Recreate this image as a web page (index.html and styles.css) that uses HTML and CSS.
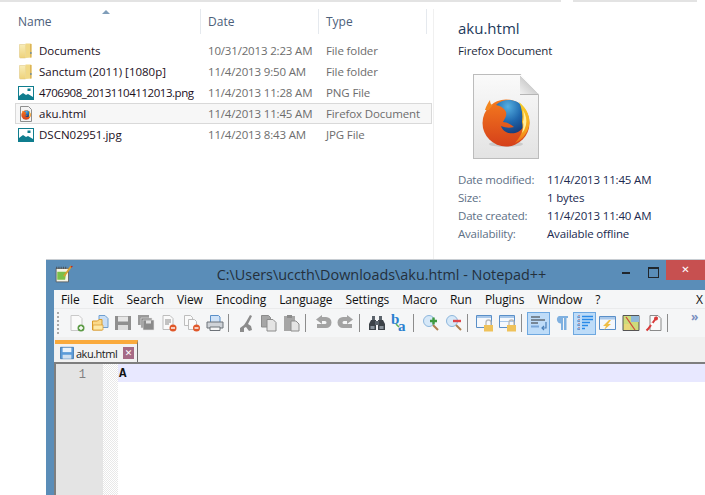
FILE: index.html
```html
<!DOCTYPE html>
<html lang="en">
<head>
<meta charset="utf-8">
<title>aku.html - Notepad++</title>
<link rel="stylesheet" href="styles.css">
</head>
<body>
<svg class="defs" width="0" height="0" aria-hidden="true">
  <defs>
    <linearGradient id="gFolder" x1="0" x2="0" y1="0" y2="1"><stop offset="0" stop-color="#f8edb8"/><stop offset="1" stop-color="#eed27a"/></linearGradient>
    <radialGradient id="gGlobe" cx=".4" cy=".2" r=".85"><stop offset="0" stop-color="#55b0e2"/><stop offset=".55" stop-color="#1f67ad"/><stop offset="1" stop-color="#163a78"/></radialGradient>
    <linearGradient id="gFox" x1="0" x2="0" y1="0" y2="1"><stop offset="0" stop-color="#f47a1e"/><stop offset="1" stop-color="#d5401a"/></linearGradient>
    <linearGradient id="gFlame" x1="0" x2="0" y1="0" y2="1"><stop offset="0" stop-color="#f7d02a"/><stop offset=".7" stop-color="#f6a31c"/><stop offset="1" stop-color="#ec6d1a"/></linearGradient>
    <symbol id="fox" viewBox="0 0 50 50">
      <ellipse cx="25" cy="46" rx="17" ry="3" fill="#000" opacity=".12"/>
      <circle cx="25" cy="25" r="23.500" fill="url(#gFox)"/>
      <path d="M4 12C5 8 7 5 9 2c0 3 1 5 3 5-1 1-3 3-4 5z" fill="#f4861f"/>
      <path d="M15 7C22 0 36 0 42 9c5 9 3 21-5 25-6 3-15 1-17-6 5 2 9 2 13 1-4-3-8-5-11-5 2-4 4-6 3-10-1-3-5-6-10-7z" fill="url(#gGlobe)"/>
      <path d="M38 4c8 6 12 16 10 24-2 8-7 14-14 17 6-7 9-13 7-21 1-7 0-14-3-20z" fill="url(#gFlame)"/>
      <path d="M42 12c3 5 4 10 3 15-1 3-2 6-4 8 1-4 2-7 1-11 1-4 1-8 0-12z" fill="#fff0a0"/>
    </symbol>
    <symbol id="folder" viewBox="0 0 16 16">
      <path d="M1.500 1.500h6v13.500h-5a1 1 0 0 1-1-1z" fill="url(#gFolder)" stroke="#dcc27a" stroke-width=".5"/>
      <path d="M7.500 .5h5a1 1 0 0 1 1 1v13l-6 .5z" fill="#f1d987"/>
      <path d="M12 1h1.500v13.500H12z" fill="#dcb457"/>
      <rect x="12.300" y="9" width="1.200" height="2" fill="#5d87a8"/>
    </symbol>
    <symbol id="image" viewBox="0 0 16 16">
      <rect x=".5" y="1.500" width="15" height="13" fill="#fff" stroke="#0f7d8e"/>
      <path d="M1 14v-3l4-3 3 2 2-1 5 3v2z" fill="#0f7d8e"/>
      <rect x="9.500" y="3.500" width="3" height="2.500" fill="#0f7d8e"/>
    </symbol>
    <symbol id="sm-doc" viewBox="0 0 16 16">
      <path d="M2.500 .5h8l3 3v12h-11z" fill="#f4f4f4" stroke="#8f8f8f"/>
    </symbol>
    <symbol id="i-new" viewBox="0 0 18 18">
      <path d="M3 1.500h8l3 3v12H3z" fill="#fafafa" stroke="#c9c9c9"/>
      <circle cx="13" cy="14" r="3.500" fill="#5d9b46"/>
      <path d="M11 14h4M13 12v4" stroke="#fff" stroke-width="1.400"/>
    </symbol>
    <symbol id="i-open" viewBox="0 0 18 18">
      <path d="M8 1.500h6l3 3v9H8z" fill="#c9def5" stroke="#6f9fd0"/>
      <path d="M1.500 7h5l1.500-1.500h3V16h-9.500z" fill="#fbd98a" stroke="#d99a2b"/>
      <path d="M2 11h10v5H2z" fill="#fde9a8" stroke="#d99a2b" stroke-width=".7"/>
    </symbol>
    <symbol id="i-save" viewBox="0 0 18 18">
      <path d="M1 2h16v14H1z" fill="#8f8f8f"/>
      <path d="M4 2.500h10v5H4z" fill="#e6e6e6"/>
      <path d="M4 11h10v5H4z" fill="#dcdcdc"/>
    </symbol>
    <symbol id="i-saveall" viewBox="0 0 18 18">
      <path d="M1 1h11v10H1z" fill="#9a9a9a"/>
      <path d="M4 4h11v10H4z" fill="#8a8a8a" stroke="#e8e8e8" stroke-width=".6"/>
      <path d="M6 6h11v10H6z" fill="#8a8a8a" stroke="#e8e8e8" stroke-width=".6"/>
      <path d="M9 6.500h5v3H9z" fill="#e0e0e0"/>
    </symbol>
    <symbol id="i-close" viewBox="0 0 18 18">
      <path d="M3 1.500h7l3 3v11H3z" fill="#fafafa" stroke="#bdbdbd"/>
      <path d="M5 6h6M5 8h6M5 10h4" stroke="#8a8a8a"/>
      <circle cx="13" cy="14" r="3.500" fill="#e0582a"/>
      <path d="M11 14h4" stroke="#fff" stroke-width="1.400"/>
    </symbol>
    <symbol id="i-closeall" viewBox="0 0 18 18">
      <path d="M1.500 1.500h6l2 2v8h-8z" fill="#fafafa" stroke="#bdbdbd"/>
      <path d="M5.500 5.500h6l2 2v8h-8z" fill="#fafafa" stroke="#bdbdbd"/>
      <circle cx="13.500" cy="14" r="3.500" fill="#e0582a"/>
      <path d="M11.500 14h4" stroke="#fff" stroke-width="1.400"/>
    </symbol>
    <symbol id="i-print" viewBox="0 0 18 18">
      <path d="M4.500 1.500h8l1.500 1.500v6H4.500z" fill="#cfe2f7" stroke="#5a8fc8"/>
      <path d="M1 8h16v6H1z" fill="#cfd3d8" stroke="#6d7278"/>
      <path d="M4 13h10v3.500H4z" fill="#f5f5f5" stroke="#6d7278"/>
    </symbol>
    <symbol id="i-cut" viewBox="0 0 18 18">
      <path d="M13 1l2 1-4 8 3 2 1 4-3 1-3-4-2 1 0 4-4 0 0-4 4-3 2-3z" fill="#8c8c8c"/>
    </symbol>
    <symbol id="i-copy" viewBox="0 0 18 18">
      <path d="M1.500 1.500h7l2 2V13h-9z" fill="#a6a6a6" stroke="#8c8c8c"/>
      <path d="M7 5.500h6l3 3V17H7z" fill="#e4e4e4" stroke="#8c8c8c"/>
    </symbol>
    <symbol id="i-paste" viewBox="0 0 18 18">
      <path d="M1 2h11v15H1z" fill="#a6a6a6"/>
      <path d="M4 1h5v3H4z" fill="#8c8c8c"/>
      <path d="M8 7h5l3 3v7H8z" fill="#e4e4e4" stroke="#8c8c8c"/>
    </symbol>
    <symbol id="i-undo" viewBox="0 0 18 18">
      <path d="M8 3h4a5 5 0 0 1 0 11H3v-4h8a1.500 1.500 0 0 0 0-3H8v3L2 5.500 8 1z" fill="#a3a3a3"/>
    </symbol>
    <symbol id="i-redo" viewBox="0 0 18 18">
      <path d="M10 3H6a5 5 0 0 0 0 11h9v-4H7a1.500 1.500 0 0 1 0-3h3v3l6-4.500L10 1z" fill="#a3a3a3"/>
    </symbol>
    <symbol id="i-find" viewBox="0 0 18 18">
      <path d="M3 6h5v10H1v-6zM15 6h-5v10h7v-6z" fill="#3c4248"/>
      <path d="M4 2h3v4H4zM11 2h3v4h-3zM7 7h4v4H7z" fill="#5c646c"/>
      <path d="M2.500 12h4v3h-4zM11.500 12h4v3h-4z" fill="#8a939c"/>
    </symbol>
    <symbol id="i-replace" viewBox="0 0 18 18">
      <text x="0" y="10" class="rep">b</text>
      <text x="7" y="17" class="rep">a</text>
      <path d="M5 10l3 3" stroke="#5cae58" stroke-width="1.500"/>
    </symbol>
    <symbol id="i-zin" viewBox="0 0 18 18">
      <circle cx="7" cy="7" r="5.500" fill="#d6e8f8" stroke="#8db6dc"/>
      <path d="M11 11l5 5" stroke="#b08050" stroke-width="2"/>
      <path d="M8 7h7M11.500 3.500v7" stroke="#3f9a3f" stroke-width="2.400"/>
    </symbol>
    <symbol id="i-zout" viewBox="0 0 18 18">
      <circle cx="7" cy="7" r="5.500" fill="#d6e8f8" stroke="#8db6dc"/>
      <path d="M11 11l5 5" stroke="#b08050" stroke-width="2"/>
      <path d="M8 7h8" stroke="#e0454a" stroke-width="2.400"/>
    </symbol>
    <symbol id="i-lock1" viewBox="0 0 18 18">
      <path d="M.5 1.500h15v12H.5z" fill="#f5f8fc" stroke="#5a8fc8"/>
      <path d="M1 2h14v2H1z" fill="#a9c8ea"/>
      <path d="M8 11h9v6.500H8z" fill="#efc25a"/>
      <path d="M10 11V8.500a2.500 2.500 0 0 1 5 0V11" fill="none" stroke="#b9b9b9" stroke-width="1.300"/>
    </symbol>
    <symbol id="i-lock2" viewBox="0 0 18 18">
      <path d="M.5 1.500h15v12H.5z" fill="#f5f8fc" stroke="#5a8fc8"/>
      <path d="M1 2h14v2H1zM1 7h14v1H1z" fill="#a9c8ea"/>
      <path d="M8 11h9v6.500H8z" fill="#efc25a"/>
      <path d="M10 11V8.500a2.500 2.500 0 0 1 5 0V11" fill="none" stroke="#b9b9b9" stroke-width="1.300"/>
    </symbol>
    <symbol id="i-wrap" viewBox="0 0 18 18">
      <path d="M1 3h9M1 6h14M1 9h7" stroke="#333" stroke-width="1.200"/>
      <path d="M1 12.500h8" stroke="#7ba7d8" stroke-width="2"/>
      <path d="M16 8v6h-4m2-2l-2 2 2 2" fill="none" stroke="#4a7fb8" stroke-width="1.200"/>
    </symbol>
    <symbol id="i-para" viewBox="0 0 18 18">
      <path d="M6 2h9v2h-1.500v12h-2.500V4H10v12H8V9.500A4 4 0 0 1 6 2z" fill="#7fb0e0"/>
    </symbol>
    <symbol id="i-indent" viewBox="0 0 18 18">
      <path d="M3 1v16" stroke="#c05050" stroke-dasharray="1 1"/>
      <path d="M1 3h3M1 7h3M1 11h3M1 15h3" stroke="#3a8ad8"/>
      <path d="M6 2.500h11M6 5.500h11M6 8.500h8M6 11.500h6M6 14.500h3" stroke="#2a8ae8" stroke-width="1.400"/>
    </symbol>
    <symbol id="i-light" viewBox="0 0 18 18">
      <path d="M.5 2.500h16v13H.5z" fill="#f5f8fc" stroke="#5a8fc8"/>
      <path d="M1 3h15v2.500H1z" fill="#a9c8ea"/>
      <path d="M10 6l-6 6h3l-2 4 7-6H9l3-4z" fill="#efbe45"/>
    </symbol>
    <symbol id="i-map" viewBox="0 0 18 18">
      <path d="M1 1.500h16v15H1z" fill="#cddc7a" stroke="#555"/>
      <path d="M9 2h8v6H9z" fill="#8fb8d8"/>
      <path d="M2 10h6v6H2z" fill="#e8d87a"/>
      <path d="M4 3l9 13" stroke="#d04a3a" stroke-width="1.300"/>
    </symbol>
    <symbol id="i-macro" viewBox="0 0 18 18">
      <path d="M5 1.500h8l3 3v12H5z" fill="#fafafa" stroke="#8a8a8a"/>
      <path d="M12 3L3 15l-1.500 1.500" stroke="#d83a3a" stroke-width="2" fill="none"/>
      <circle cx="11" cy="4.500" r="2" fill="#d83a3a"/>
      <circle cx="7" cy="10" r="1.500" fill="#fff"/>
    </symbol>
  </defs>
</svg>

<main class="explorer">
  <div class="top-line"><span class="seg-a"></span><span class="seg-b"></span><span class="seg-c"></span></div>
  <div class="panes">
    <section class="list">
      <div class="col-head">
        <span class="col col-name">Name<span class="sort-arrow"></span></span>
        <span class="col col-date">Date</span>
        <span class="col col-type">Type</span>
      </div>
      <div class="row"><svg class="file-ic"><use href="#folder"/></svg><span class="r-name">Documents</span><span class="r-date">10/31/2013 2:23 AM</span><span class="r-type">File folder</span></div>
      <div class="row"><svg class="file-ic"><use href="#folder"/></svg><span class="r-name">Sanctum (2011) [1080p]</span><span class="r-date">11/4/2013 9:50 AM</span><span class="r-type">File folder</span></div>
      <div class="row"><svg class="file-ic"><use href="#image"/></svg><span class="r-name r-digits">4706908_20131104112013.png</span><span class="r-date">11/4/2013 11:28 AM</span><span class="r-type">PNG File</span></div>
      <div class="row row-sel"><span class="file-doc"><svg class="file-ic"><use href="#sm-doc"/></svg><svg class="file-fox"><use href="#fox"/></svg></span><span class="r-name">aku.html</span><span class="r-date">11/4/2013 11:45 AM</span><span class="r-type">Firefox Document</span></div>
      <div class="row"><svg class="file-ic"><use href="#image"/></svg><span class="r-name">DSCN02951.jpg</span><span class="r-date">11/4/2013 8:43 AM</span><span class="r-type">JPG File</span></div>
    </section>
    <aside class="details">
      <h1 class="d-title">aku.html</h1>
      <p class="d-sub">Firefox Document</p>
      <div class="d-thumb">
        <div class="d-page"><span class="d-fold"></span><svg class="d-fox"><use href="#fox"/></svg></div>
      </div>
      <dl class="props">
        <dt>Date modified:</dt><dd>11/4/2013 11:45 AM</dd>
        <dt>Size:</dt><dd>1 bytes</dd>
        <dt>Date created:</dt><dd>11/4/2013 11:40 AM</dd>
        <dt>Availability:</dt><dd>Available offline</dd>
      </dl>
    </aside>
  </div>
</main>

<div class="npp">
  <div class="titlebar">
    <svg class="app-ic" viewBox="0 0 16 16"><path d="M1 3h11v12H1z" fill="#f7f5e6" stroke="#555" stroke-width=".7"/><path d="M2 6l8 0-1 7H2z" fill="#7cc04a"/><path d="M1.500 1.500v2M3.500 1.500v2M5.500 1.500v2M7.500 1.500v2M9.500 1.500v2" stroke="#444" stroke-width=".7"/><path d="M14.500 1L8 10" stroke="#d8a030" stroke-width="1.600"/><path d="M14.500 1l.5 1" stroke="#c02020" stroke-width="1.600"/></svg>
    <span class="win-title">C:\Users\uccth\Downloads\aku.html - Notepad++</span>
    <span class="win-btns">
      <span class="wb wb-min"></span>
      <span class="wb wb-max"></span>
      <span class="wb-close">✕</span>
    </span>
  </div>
  <div class="client">
    <nav class="menu">
      <span>File</span><span>Edit</span><span>Search</span><span>View</span><span>Encoding</span><span>Language</span><span>Settings</span><span>Macro</span><span>Run</span><span>Plugins</span><span>Window</span><span>?</span>
      <span class="menu-x">X</span>
    </nav>
    <div class="toolbar">
      <span class="grip"></span>
      <span class="tb"><svg class="ti"><use href="#i-new"/></svg></span>
      <span class="tb"><svg class="ti"><use href="#i-open"/></svg></span>
      <span class="tb"><svg class="ti"><use href="#i-save"/></svg></span>
      <span class="tb"><svg class="ti"><use href="#i-saveall"/></svg></span>
      <span class="tb"><svg class="ti"><use href="#i-close"/></svg></span>
      <span class="tb"><svg class="ti"><use href="#i-closeall"/></svg></span>
      <span class="tb"><svg class="ti"><use href="#i-print"/></svg></span>
      <span class="sep"></span>
      <span class="tb"><svg class="ti"><use href="#i-cut"/></svg></span>
      <span class="tb"><svg class="ti"><use href="#i-copy"/></svg></span>
      <span class="tb"><svg class="ti"><use href="#i-paste"/></svg></span>
      <span class="sep"></span>
      <span class="tb"><svg class="ti"><use href="#i-undo"/></svg></span>
      <span class="tb"><svg class="ti"><use href="#i-redo"/></svg></span>
      <span class="sep"></span>
      <span class="tb"><svg class="ti"><use href="#i-find"/></svg></span>
      <span class="tb"><svg class="ti"><use href="#i-replace"/></svg></span>
      <span class="sep"></span>
      <span class="tb"><svg class="ti"><use href="#i-zin"/></svg></span>
      <span class="tb"><svg class="ti"><use href="#i-zout"/></svg></span>
      <span class="sep"></span>
      <span class="tb"><svg class="ti"><use href="#i-lock1"/></svg></span>
      <span class="tb"><svg class="ti"><use href="#i-lock2"/></svg></span>
      <span class="sep"></span>
      <span class="tb tb-on"><svg class="ti"><use href="#i-wrap"/></svg></span>
      <span class="tb"><svg class="ti"><use href="#i-para"/></svg></span>
      <span class="tb tb-on"><svg class="ti"><use href="#i-indent"/></svg></span>
      <span class="tb"><svg class="ti"><use href="#i-light"/></svg></span>
      <span class="tb"><svg class="ti"><use href="#i-map"/></svg></span>
      <span class="tb"><svg class="ti"><use href="#i-macro"/></svg></span>
      <span class="sep"></span>
      <span class="more">»</span>
    </div>
    <div class="tabbar">
      <div class="tab">
        <svg class="tab-ic" viewBox="0 0 16 16"><path d="M.5 1.500h15v13H.5z" fill="#5b9bd8" stroke="#3f78b0"/><path d="M3 2h10v5H3z" fill="#eaf3fb"/><path d="M3 10h10v4.500H3z" fill="#cfe0f0"/></svg>
        <span class="tab-name">aku.html</span>
        <span class="tab-x">✕</span>
      </div>
    </div>
    <div class="editor">
      <div class="gutter"><span class="ln">1</span></div>
      <div class="fold"></div>
      <div class="code"><div class="cur-line">A</div></div>
    </div>
  </div>
</div>
</body>
</html>
```
FILE: styles.css
```css
* { box-sizing: border-box; }
html, body { margin: 0; padding: 0; }
body {
  position: relative;
  width: 705px;
  height: 495px;
  overflow: hidden;
  background: #fff;
  font-family: "Open Sans", "Noto Sans", sans-serif;
  font-size: 11.5px;
  color: #1a1a1a;
}
.defs { position: absolute; }

/* Explorer */
.explorer { height: 260px; }
.top-line { display: flex; height: 2px; background: #fff; }
.seg-a { width: 561px; background: #e3e3e3; }
.seg-b { width: 12px; }
.seg-c { width: 124px; background: #e3e3e3; }
.panes { display: flex; height: 258px; }
.list { width: 433px; flex: none; }
.col-head {
  display: grid;
  grid-template-columns: 201px 118px 108px;
  height: 25px;
  margin-top: 7px;
  margin-bottom: 6px;
  color: #4c607a;
  font-size: 12px;
}
.col {
  display: flex;
  align-items: center;
  border-right: 1px solid #e5e9ee;
  padding-left: 7px;
  height: 25px;
  position: relative;
}
.col-name { padding-left: 18px; }
.sort-arrow {
  position: absolute;
  left: 102px;
  top: 1px;
  border: 4px solid transparent;
  border-top: 0;
  border-bottom: 4px solid #7f9db9;
}
.row {
  display: flex;
  align-items: center;
  height: 21px;
  padding-left: 18px;
  border: 1px solid transparent;
  border-width: 1px 0;
  white-space: nowrap;
}
.row-sel {
  margin-left: 15px;
  padding-left: 2px;
  width: 417px;
  background: #f7f7f7;
  border: 1px solid #d9d9d9;
}
.file-ic { width: 16px; height: 16px; flex: none; }
.file-doc { position: relative; width: 16px; height: 16px; flex: none; }
.file-fox { position: absolute; left: 3px; top: 4px; width: 10px; height: 10px; }
.r-name { width: 169px; margin-left: 5px; color: #1c0f1c; flex: none; }
.r-digits { letter-spacing: -.46px; }
.r-date { width: 118px; color: #6d6d6d; flex: none; letter-spacing: -.17px; }
.r-type { color: #6d6d6d; flex: none; letter-spacing: -.12px; }

.details {
  flex: 1;
  border-left: 1px solid #f0f0f0;
  margin-top: 7px;
  padding: 8px 0 0 24px;
}
.d-title { margin: 0; font-size: 15px; font-weight: 400; line-height: 22px; color: #1e3a5c; }
.d-sub { margin: 3px 0 0; font-size: 11.500px; line-height: 17px; letter-spacing: -.1px; color: #1e2a3c; }
.d-thumb { margin: 15px 0 0 15px; }
.d-page {
  position: relative;
  width: 66px;
  height: 85px;
  background: linear-gradient(#fafafa, #e3e3e3);
  border: 1px solid #bcbcbc;
  clip-path: polygon(0 0, 72% 0, 100% 24%, 100% 100%, 0 100%);
}
.d-fold {
  position: absolute;
  right: 0;
  top: 0;
  width: 18px;
  height: 20px;
  background: linear-gradient(225deg, transparent 50%, #cfcfcf 50%, #f1f1f1);
  border-bottom: 1px solid #b5b5b5;
}
.d-fox { position: absolute; left: 7px; top: 23px; width: 50px; height: 50px; }
.props {
  display: grid;
  grid-template-columns: 89px 1fr;
  margin: 12px 0 0;
  line-height: 18px;
}
.props dt { color: #5d6f85; letter-spacing: -.2px; }
.props dd { margin: 0; color: #202a50; letter-spacing: -.17px; }

/* Notepad++ */
.npp {
  position: absolute;
  left: 46px;
  top: 259px;
  width: 659px;
  height: 236px;
  background: #5a8db8;
  border-top: 1px solid #c8cdd2;
  padding: 0 0 0 8px;
}
.titlebar {
  display: flex;
  align-items: flex-start;
  height: 30px;
  margin-left: -8px;
  position: relative;
}
.app-ic { width: 18px; height: 18px; margin: 5px 0 0 9px; }
.win-title {
  position: absolute;
  left: 0;
  right: 0;
  top: 5px;
  text-align: center;
  padding-left: 12px;
  font-size: 14.400px;
  line-height: 20px;
  color: #24303c;
}
.win-btns { margin-left: auto; display: flex; align-items: flex-start; position: relative; }
.wb { display: block; width: 27px; height: 20px; position: relative; }
.wb-min::after {
  content: "";
  position: absolute;
  left: 10px;
  top: 12px;
  width: 8px;
  height: 2px;
  background: #20262c;
}
.wb-max::after {
  content: "";
  position: absolute;
  left: 9px;
  top: 7px;
  width: 9px;
  height: 8px;
  border: 1px solid #20262c;
  border-top-width: 2px;
}
.wb-close {
  display: block;
  width: 39px;
  height: 20px;
  background: #c75050;
  color: #fff;
  font-size: 10px;
  font-weight: 700;
  line-height: 20px;
  text-align: center;
  font-family: "DejaVu Sans", sans-serif;
}
.client { height: 205px; background: #f0f0f0; }
.menu {
  display: flex;
  align-items: center;
  gap: 13px;
  height: 18px;
  padding-left: 7px;
  background: #f5f6f7;
  font-size: 12px;
  letter-spacing: -.1px;
  color: #101010;
  white-space: nowrap;
  position: relative;
}
.menu-x { position: absolute; left: 642px; }
.toolbar {
  display: flex;
  align-items: center;
  height: 29px;
  padding-left: 11px;
  background: #f5f6f7;
  border-top: 1px solid #eaebec;
  position: relative;
}
.grip {
  position: absolute;
  left: 3px;
  top: 3px;
  width: 2px;
  height: 24px;
  background: repeating-linear-gradient(#a9a9a9 0 2px, transparent 2px 4px);
}
.tb {
  width: 23px;
  height: 23px;
  flex: none;
  display: flex;
  align-items: center;
  justify-content: center;
}
.tb-on { background: #bedcf8; border: 1px solid #6ea8e0; }
.ti { width: 18px; height: 18px; }
.rep { font: 700 15px "Liberation Serif", serif; fill: #2a80d0; }
.sep { width: 8px; height: 18px; flex: none; position: relative; }
.sep::after {
  content: "";
  position: absolute;
  left: 2px;
  top: 0;
  width: 1px;
  height: 18px;
  background: #8c8c8c;
}
.more { position: absolute; left: 637px; top: 1px; font-size: 12px; font-weight: 700; line-height: 14px; color: #7a8fc0; }
.tabbar { height: 25px; padding: 3px 0 0 1px; background: #f0f0f0; }
.tab {
  display: flex;
  align-items: center;
  width: 83px;
  height: 22px;
  background: #f2f2f2;
  border-top: 4px solid #faaa3c;
  border-right: 1px solid #6d6d6d;
  padding-left: 5px;
}
.tab-ic { width: 14px; height: 14px; flex: none; }
.tab-name { margin-left: 2px; font-size: 11px; letter-spacing: -.5px; color: #1a1a1a; }
.tab-x {
  margin-left: auto;
  margin-right: 3px;
  width: 11px;
  height: 12px;
  background: #a66a86;
  color: #fff;
  font: 700 9px/12px "DejaVu Sans", sans-serif;
  text-align: center;
}
.editor {
  display: flex;
  height: 133px;
  border-top: 2px solid #7e7e7e;
  border-left: 2px solid #7e7e7e;
  background: #fff;
}
.gutter { width: 47px; background: #e4e4e4; flex: none; text-align: right; padding-right: 17px; line-height: 20px; }
.ln { font: 400 12px/20px "Liberation Mono", monospace; color: #808080; }
.fold {
  width: 15px;
  flex: none;
  background: repeating-conic-gradient(#e8e8e8 0 25%, #fff 0 50%) 0 0 / 2px 2px;
}
.code { flex: 1; }
.cur-line {
  height: 18px;
  padding-left: 1px;
  background: #e8e8ff;
  font: 700 12.500px/20px "Liberation Mono", monospace;
  color: #111;
}
```
